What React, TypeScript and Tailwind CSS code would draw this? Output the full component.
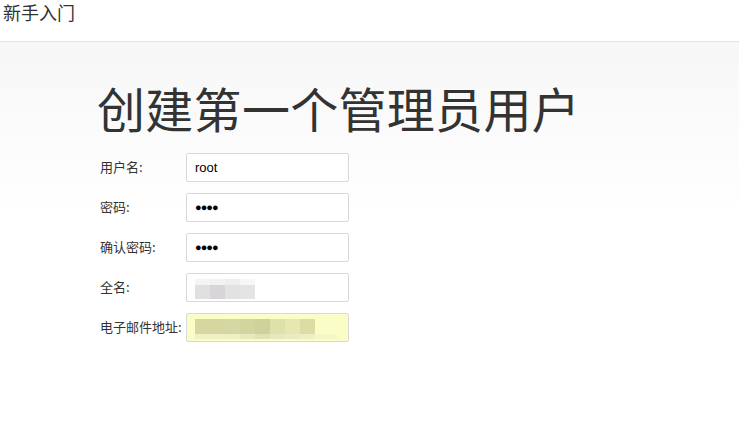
import React from "react";

const font = { fontFamily: '"Noto Sans CJK SC", "Liberation Sans", sans-serif' };

function Row({ label, children }: { label: string; children: React.ReactNode }) {
  return (
    <div className="flex items-center h-[29px] mb-[11px]">
      <div className="w-[86px] text-[13px] text-[#333] leading-none -mt-[2px]">{label}</div>
      {children}
    </div>
  );
}

function Box({ children, cls = "bg-white" }: { children?: React.ReactNode; cls?: string }) {
  return (
    <div className={`relative w-[163px] h-[29px] border border-[#d9d9d9] rounded-[2px] ${cls} overflow-hidden`}>
      {children}
    </div>
  );
}

export default function App() {
  return (
    <div className="w-[739px] h-[438px] bg-white text-[#333]" style={font}>
      <div className="h-[42px] border-b border-[#e5e5e5] bg-white">
        <div className="pl-[3px] pt-[0px] text-[18px] leading-[24px] text-[#333]">新手入门</div>
      </div>
      <div className="h-[396px] bg-gradient-to-b from-[#f7f7f7] to-white to-[45%]">
        <div className="pl-[97px] pt-[35px]">
          <h1 className="text-[48px] leading-[60px] text-[#333] font-normal mb-[16px] tracking-[0.3px]">创建第一个管理员用户</h1>
          <div className="pl-[3px]">
            <Row label="用户名:">
              <Box>
                <div className="absolute left-[8px] top-0 h-full flex items-center text-[13px] text-black" style={{ fontFamily: '"Liberation Sans", sans-serif' }}>root</div>
              </Box>
            </Row>
            <Row label="密码:">
              <Box>
                <div className="absolute left-[8px] top-0 h-full flex items-center text-[11px] text-black tracking-[-1px]" style={{ fontFamily: '"Liberation Sans", sans-serif' }}>●●●●</div>
              </Box>
            </Row>
            <Row label="确认密码:">
              <Box>
                <div className="absolute left-[8px] top-0 h-full flex items-center text-[11px] text-black tracking-[-1px]" style={{ fontFamily: '"Liberation Sans", sans-serif' }}>●●●●</div>
              </Box>
            </Row>
            <Row label="全名:">
              <Box>
                <div className="absolute left-[8px] top-[5px] flex">
                  <div className="w-[15px] h-[6px] bg-[#f4f4f4]" />
                  <div className="w-[15px] h-[6px] bg-[#f2f2f2]" />
                  <div className="w-[15px] h-[6px] bg-[#eeeeee]" />
                  <div className="w-[15px] h-[6px] bg-[#f6f6f6]" />
                </div>
                <div className="absolute left-[8px] top-[11px] flex">
                  <div className="w-[15px] h-[14px] bg-[#e0e0e0]" />
                  <div className="w-[15px] h-[14px] bg-[#d7d5d7]" />
                  <div className="w-[15px] h-[14px] bg-[#e2e2e2]" />
                  <div className="w-[15px] h-[14px] bg-[#e4e4e4]" />
                </div>
              </Box>
            </Row>
            <Row label="电子邮件地址:">
              <Box cls="bg-[#fafdc5]">
                <div className="absolute left-[8px] top-[5px] flex">
                  <div className="w-[15px] h-[15px] bg-[#d5d6a0]" />
                  <div className="w-[15px] h-[15px] bg-[#d5d6a0]" />
                  <div className="w-[15px] h-[15px] bg-[#d6d8a3]" />
                  <div className="w-[15px] h-[15px] bg-[#d3d59e]" />
                  <div className="w-[15px] h-[15px] bg-[#cfd29a]" />
                  <div className="w-[15px] h-[15px] bg-[#dfe1ab]" />
                  <div className="w-[15px] h-[15px] bg-[#e6e8b4]" />
                  <div className="w-[15px] h-[15px] bg-[#dcdca5]" />
                </div>
                <div className="absolute left-[8px] top-[20px] flex">
                  <div className="w-[15px] h-[5px] bg-[#eff0c6]" />
                  <div className="w-[15px] h-[5px] bg-[#eff0c6]" />
                  <div className="w-[15px] h-[5px] bg-[#eeefc5]" />
                  <div className="w-[15px] h-[5px] bg-[#e6e8bd]" />
                  <div className="w-[15px] h-[5px] bg-[#e0e2b6]" />
                  <div className="w-[15px] h-[5px] bg-[#e6e8bd]" />
                  <div className="w-[15px] h-[5px] bg-[#eaebc2]" />
                  <div className="w-[15px] h-[5px] bg-[#eceec3]" />
                  <div className="w-[22px] h-[5px] bg-[#f4f6c6]" />
                </div>
              </Box>
            </Row>
          </div>
        </div>
      </div>
    </div>
  );
}
